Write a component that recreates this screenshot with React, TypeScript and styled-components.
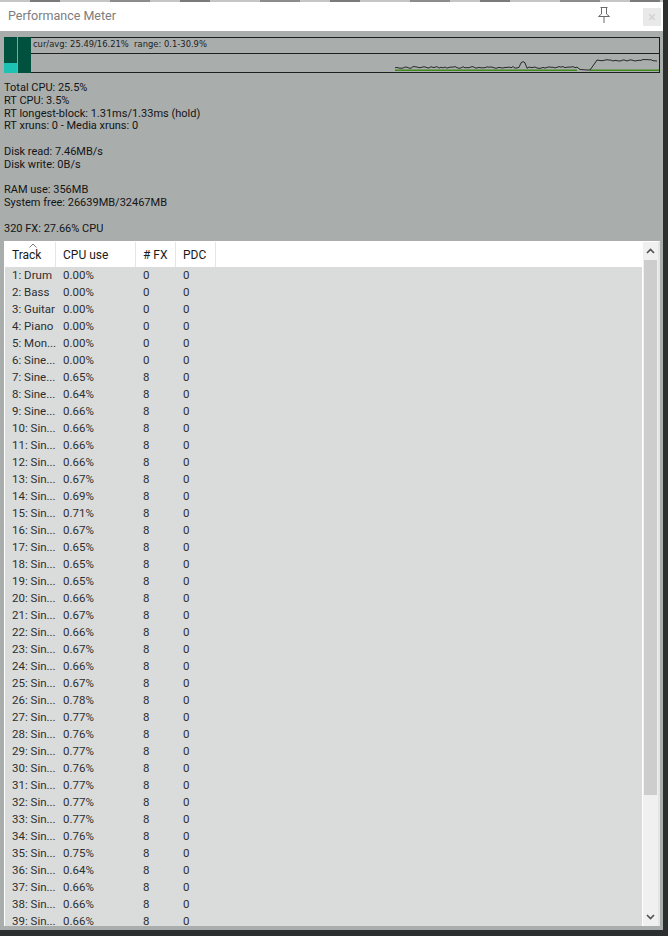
import React from "react";
import styled, { createGlobalStyle } from "styled-components";

const GlobalStyle = createGlobalStyle`
  html, body {
    margin: 0;
    padding: 0;
    background: #2c2f2f;
  }
  body {
    font-family: Roboto, "Liberation Sans", Arial, sans-serif;
  }
`;

type Track = { name: string; cpu: string; fx: number; pdc: number };

const cpuValues = [
  "0.00", "0.00", "0.00", "0.00", "0.00", "0.00", "0.65", "0.64", "0.66", "0.66",
  "0.66", "0.66", "0.67", "0.69", "0.71", "0.67", "0.65", "0.65", "0.65", "0.66",
  "0.67", "0.66", "0.67", "0.66", "0.67", "0.78", "0.77", "0.76", "0.77", "0.76",
  "0.77", "0.77", "0.77", "0.76", "0.75", "0.64", "0.66", "0.66", "0.66",
];

const names = ["Drum", "Bass", "Guitar", "Piano", "Mon...", "Sine...", "Sine...", "Sine...", "Sine..."];

const tracks: Track[] = cpuValues.map((cpu, i) => ({
  name: `${i + 1}: ${names[i] ?? "Sin..."}`,
  cpu: `${cpu}%`,
  fx: i < 6 ? 0 : 8,
  pdc: 0,
}));

// fake cpu history for the little graph
const noise = (i: number) => {
  const v = Math.sin(i * 12.9898) * 43758.5453;
  return v - Math.floor(v);
};

const buildLine = () => {
  const pts: string[] = [];
  for (let x = 364; x <= 546; x += 2) {
    let y = 12.5 + noise(x) * 1.8;
    if (x > 488 && x < 496) y = 10 - (4 - Math.abs(x - 492)) * 0.6;
    pts.push(`${x},${y.toFixed(1)}`);
  }
  pts.push("549,15.5", "556,16", "559,16", "564,9");
  for (let x = 566; x <= 627; x += 2) {
    pts.push(`${x},${(5.5 + noise(x + 7) * 1.6).toFixed(1)}`);
  }
  return pts.join(" ");
};

const graphLine = buildLine();

const columns = [
  { label: "Track", width: 51 },
  { label: "CPU use", width: 80 },
  { label: "# FX", width: 40 },
  { label: "PDC", width: 40 },
];

export default function App() {
  return (
    <>
      <GlobalStyle />
      <Window>
        <TopStrip />
        <TitleBar>
          <Title>Performance Meter</Title>
          <PinIcon width="16" height="18" viewBox="0 0 16 18">
            <path
              d="M4.5 1.5h7M5.5 1.5v6.5M10.5 1.5v6.5M5.5 8l-3 2.5h11l-3-2.5M8 10.5v6.5"
              fill="none"
              stroke="#6a6a6a"
              strokeWidth="1"
            />
          </PinIcon>
          <CloseButton>×</CloseButton>
        </TitleBar>

        <Body>
          <Graph>
            <Meter>
              <MeterColumn $level={28} />
              <MeterColumn $level={0} />
            </Meter>
            <Plot>
              <PlotCaption>cur/avg: 25.49/16.21%&nbsp;&nbsp;range: 0.1-30.9%</PlotCaption>
              <PlotArea viewBox="0 0 628 17" preserveAspectRatio="none">
                <line x1="364" y1="16.3" x2="546" y2="16.3" stroke="#3f8a1f" strokeWidth="1.4" />
                <line x1="559" y1="16.3" x2="628" y2="16.3" stroke="#3f8a1f" strokeWidth="1.4" />
                <polyline points={graphLine} fill="none" stroke="#1a1a1a" strokeWidth="0.9" />
              </PlotArea>
            </Plot>
          </Graph>

          <Stats>
            <StatLine>Total CPU: 25.5%</StatLine>
            <StatLine>RT CPU: 3.5%</StatLine>
            <StatLine>RT longest-block: 1.31ms/1.33ms (hold)</StatLine>
            <StatLine>RT xruns: 0 - Media xruns: 0</StatLine>
            <StatLine />
            <StatLine>Disk read: 7.46MB/s</StatLine>
            <StatLine>Disk write: 0B/s</StatLine>
            <StatLine />
            <StatLine>RAM use: 356MB</StatLine>
            <StatLine>System free: 26639MB/32467MB</StatLine>
            <StatLine />
            <StatLine>320 FX: 27.66% CPU</StatLine>
          </Stats>

          <ListFrame>
            <Table>
              <HeaderRow>
                {columns.map((c, i) => (
                  <HeaderCell key={c.label} $width={c.width}>
                    {i === 0 && (
                      <SortArrow viewBox="0 0 8 5" width="8" height="5">
                        <path d="M0.5 4.5L4 1l3.5 3.5" fill="none" stroke="#7a7a7a" strokeWidth="1" />
                      </SortArrow>
                    )}
                    {c.label}
                  </HeaderCell>
                ))}
              </HeaderRow>
              <Rows>
                {tracks.map((t) => (
                  <Row key={t.name}>
                    <Cell $width={51}>{t.name}</Cell>
                    <Cell $width={80}>{t.cpu}</Cell>
                    <Cell $width={40}>{t.fx}</Cell>
                    <Cell $width={40}>{t.pdc}</Cell>
                  </Row>
                ))}
              </Rows>
            </Table>
            <Scrollbar>
              <ScrollButton>
                <Chevron viewBox="0 0 9 6" width="9" height="6">
                  <path d="M1 5l3.5-3.5L8 5" fill="none" stroke="#505050" strokeWidth="1.6" />
                </Chevron>
              </ScrollButton>
              <Thumb />
              <ScrollTrack />
              <ScrollButton>
                <Chevron viewBox="0 0 9 6" width="9" height="6">
                  <path d="M1 1l3.5 3.5L8 1" fill="none" stroke="#505050" strokeWidth="1.6" />
                </Chevron>
              </ScrollButton>
            </Scrollbar>
          </ListFrame>
        </Body>
      </Window>
    </>
  );
}

const Window = styled.div`
  width: 663px;
  height: 930px;
  background: #a9adac;
  display: flex;
  flex-direction: column;
  overflow: hidden;
`;

const TopStrip = styled.div`
  height: 2px;
  background: repeating-linear-gradient(
    90deg,
    #d6d6d6 0 30px,
    #5a5a5a 30px 60px,
    #d6d6d6 60px 110px,
    #777 110px 150px
  );
  opacity: 0.6;
`;

const TitleBar = styled.div`
  height: 29px;
  background: #ffffff;
  display: flex;
  align-items: center;
  padding: 0 2px 0 8px;
  flex-shrink: 0;
`;

const Title = styled.div`
  flex: 1;
  font-size: 12.5px;
  color: #7d7d7d;
  margin-top: -2px;
`;

const PinIcon = styled.svg`
  margin-right: 31px;
  margin-top: -3px;
`;

const CloseButton = styled.div`
  width: 18px;
  height: 18px;
  background: #e9e9e9;
  color: #d2d2d2;
  font-size: 14px;
  line-height: 18px;
  text-align: center;
`;

const Body = styled.div`
  flex: 1;
  display: flex;
  flex-direction: column;
  padding: 6px 3px 4px 4px;
  min-height: 0;
`;

const Graph = styled.div`
  height: 36px;
  display: flex;
  flex-shrink: 0;
`;

const Meter = styled.div`
  width: 27px;
  display: flex;
  gap: 1px;
  background: #7fa89c;
`;

const MeterColumn = styled.div<{ $level: number }>`
  flex: 1;
  background: linear-gradient(
    to top,
    #1ec2b2 0 ${(p) => p.$level}%,
    #00523f ${(p) => p.$level}% 100%
  );
  border-top: 1px solid #004a38;
`;

const Plot = styled.div`
  flex: 1;
  display: flex;
  flex-direction: column;
  border: 1px solid #1e1e1e;
  border-left: none;
`;

const PlotCaption = styled.div`
  height: 16px;
  border-bottom: 1px solid #1e1e1e;
  font-family: "DejaVu Sans", sans-serif;
  font-size: 8.4px;
  color: #1e1e1e;
  padding: 1px 0 0 2px;
  box-sizing: border-box;
  white-space: nowrap;
`;

const PlotArea = styled.svg`
  display: block;
  width: 100%;
  height: 17px;
`;

const Stats = styled.div`
  margin-top: 9px;
  font-size: 11px;
  color: #141414;
`;

const StatLine = styled.div`
  height: 12.8px;
  line-height: 12.8px;
  white-space: nowrap;
`;

const ListFrame = styled.div`
  margin-top: 5px;
  flex: 1;
  display: flex;
  min-height: 0;
  border-top: 1px solid #ffffff;
  border-left: 1px solid #ffffff;
  border-right: 2px solid #e4e6e5;
  background: #dadcdb;
`;

const Table = styled.div`
  flex: 1;
  display: flex;
  flex-direction: column;
  min-width: 0;
  overflow: hidden;
  border-right: 1px solid #ffffff;
`;

const HeaderRow = styled.div`
  height: 25px;
  background: #ffffff;
  display: flex;
  flex-shrink: 0;
`;

const HeaderCell = styled.div<{ $width: number }>`
  position: relative;
  width: ${(p) => p.$width}px;
  box-sizing: border-box;
  border-right: 1px solid #e5e5e5;
  padding: 6px 0 0 7px;
  font-size: 12px;
  color: #1a1a1a;
  white-space: nowrap;
`;

const SortArrow = styled.svg`
  position: absolute;
  top: 1px;
  left: 24px;
`;

const Rows = styled.div`
  display: flex;
  flex-direction: column;
`;

const Row = styled.div`
  height: 17px;
  display: flex;
  flex-shrink: 0;
  align-items: center;
`;

const Cell = styled.div<{ $width: number }>`
  width: ${(p) => p.$width}px;
  padding-left: 7px;
  box-sizing: border-box;
  font-size: 11.5px;
  color: #2e2e2e;
  white-space: nowrap;
`;

const Scrollbar = styled.div`
  width: 15px;
  display: flex;
  flex-direction: column;
  background: #f0f0f0;
`;

const ScrollButton = styled.div`
  height: 18px;
  display: flex;
  align-items: center;
  justify-content: center;
  flex-shrink: 0;
`;

const Chevron = styled.svg`
  display: block;
`;

const Thumb = styled.div`
  height: 535px;
  margin: 0 1px;
  background: #cdcdcd;
  flex-shrink: 0;
`;

const ScrollTrack = styled.div`
  flex: 1;
`;
